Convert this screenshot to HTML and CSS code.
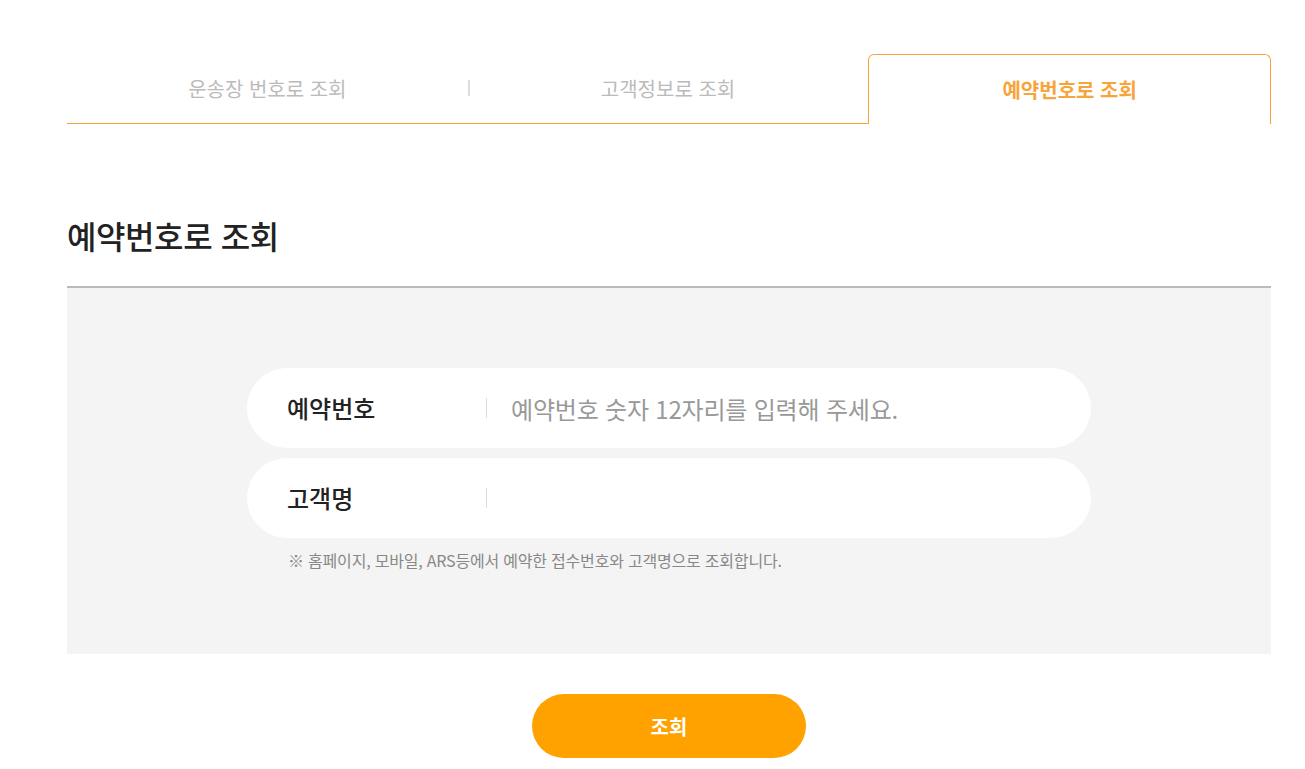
FILE: index.html
```html
<!DOCTYPE html>
<html lang="ko">
<head>
    <meta charset="utf-8">
    <title>예약번호로 조회</title>
    <link rel="stylesheet" href="styles.css">
</head>
<body>
<div class="wrapper">
    <div class="tabs">
        <a class="tab" href="#">운송장 번호로 조회</a>
        <a class="tab sep" href="#">고객정보로 조회</a>
        <a class="tab active" href="#">예약번호로 조회</a>
    </div>

    <h2 class="title">예약번호로 조회</h2>

    <div class="search-box">
        <div class="field">
            <label for="resv-no">예약번호</label>
            <input id="resv-no" type="text" placeholder="예약번호 숫자 12자리를 입력해 주세요.">
        </div>
        <div class="field">
            <label for="cust-name">고객명</label>
            <input id="cust-name" type="text">
        </div>
        <p class="note">※ 홈페이지, 모바일, ARS등에서 예약한 접수번호와 고객명으로 조회합니다.</p>
    </div>

    <div class="btn-area">
        <button class="btn-search">조회</button>
    </div>
</div>
</body>
</html>
```

FILE: styles.css
```css
html, body {
    margin: 0;
    background-color: #fff;
    font-family: "Noto Sans CJK KR", "Noto Sans", sans-serif;
}

.wrapper {
    width: 1204px;
    margin-left: 67px;
    padding-top: 54px;
}

/* 탭 */
.tabs {
    display: flex;
    height: 70px;
}

.tab {
    flex: 1;
    display: flex;
    align-items: center;
    justify-content: center;
    position: relative;
    font-size: 20px;
    color: #bbb;
    text-decoration: none;
    border-bottom: 1px solid #f5a33c;
    box-sizing: border-box;
}

.tab.sep::before {
    content: "";
    position: absolute;
    left: 0;
    top: 26px;
    width: 2px;
    height: 16px;
    background-color: #ddd;
}

.tab.active {
    color: #f9a43a;
    font-weight: 700;
    border: 1px solid #f5a33c;
    border-bottom: none;
    border-radius: 6px 6px 0 0;
}

.title {
    margin: 88px 0 28px 0;
    font-size: 32px;
    font-weight: 500;
    letter-spacing: -0.4px;
    color: #222;
    line-height: 46px;
}

/* 검색 영역 */
.search-box {
    background-color: #f4f4f4;
    border-top: 2px solid #bbb;
    height: 368px;
    padding-top: 80px;
    display: flex;
    flex-direction: column;
    align-items: center;
    box-sizing: border-box;
}

.field {
    display: flex;
    align-items: center;
    width: 844px;
    height: 80px;
    background-color: #fff;
    border-radius: 40px;
    margin-bottom: 10px;
}

.field label {
    width: 199px;
    padding-left: 40px;
    font-size: 24px;
    font-weight: 500;
    color: #222;
    border-right: 1px solid #ddd;
    line-height: 20px;
}

.field input {
    flex: 1;
    border: none;
    outline: none;
    background: transparent;
    font-family: inherit;
    font-size: 24px;
    letter-spacing: -0.2px;
    color: #222;
    padding: 0 24px;
}

.field input::placeholder {
    color: #999;
}

.note {
    width: 844px;
    box-sizing: border-box;
    padding-left: 41px;
    margin: 0;
    font-size: 16px;
    color: #888;
    letter-spacing: -0.2px;
}

.btn-area {
    display: flex;
    justify-content: center;
    padding-top: 40px;
}

.btn-search {
    width: 274px;
    height: 64px;
    border: none;
    border-radius: 32px;
    background-color: #ffa200;
    color: #fff;
    font-family: inherit;
    font-size: 20px;
    font-weight: 700;
    cursor: pointer;
}
```
